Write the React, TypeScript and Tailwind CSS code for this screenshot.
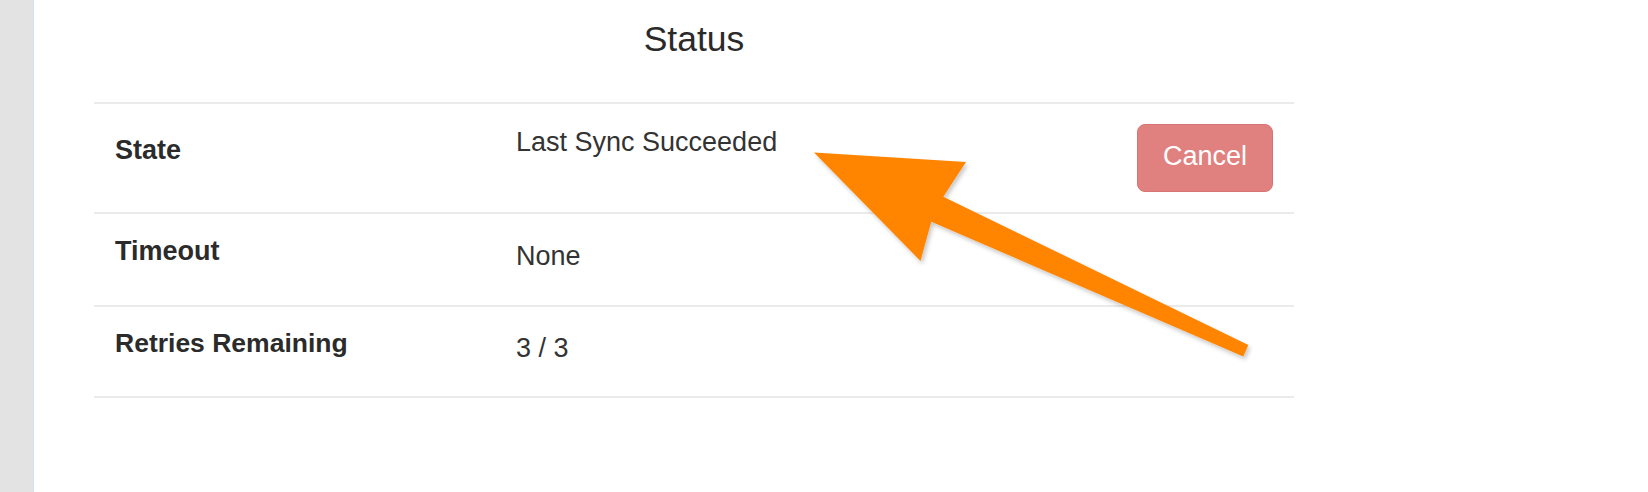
import React from "react";

export default function App() {
  return (
    <div className="relative flex h-[492px] w-[1648px] overflow-hidden bg-white font-['Liberation_Sans',Arial,sans-serif]">
      <div className="h-full w-[34px] shrink-0 border-r border-[#d8e2ea] bg-[#e3e3e3]" />
      <div className="pl-[60px]">
        <div className="w-[1200px]">
          <div className="h-[102px] pt-[21px] text-center text-[35.5px] leading-[36px] text-[#2a2a2a]">
            Status
          </div>

          <div className="flex h-[110px] border-t-2 border-[#ebebeb]">
            <div className="w-[400px] shrink-0 pl-[21px] pt-[33px] text-[27px] font-bold leading-[27px] text-[#2b2b2b]">
              State
            </div>
            <div className="flex-1 pl-[22px] pt-[25px] text-[27px] leading-[27px] text-[#333333]">
              Last Sync Succeeded
            </div>
            <div className="shrink-0 pr-[21px] pt-[20px]">
              <button className="flex h-[68px] w-[136px] items-center justify-center rounded-[8px] border border-[#d97473] bg-[#e1817f] pb-[4px] text-[27px] leading-[27px] text-white">
                Cancel
              </button>
            </div>
          </div>

          <div className="flex h-[93px] border-t-2 border-[#ebebeb]">
            <div className="w-[400px] shrink-0 pl-[21px] pt-[24px] text-[27px] font-bold leading-[27px] text-[#2b2b2b]">
              Timeout
            </div>
            <div className="flex-1 pl-[22px] pt-[29px] text-[27px] leading-[27px] text-[#333333]">
              None
            </div>
          </div>

          <div className="flex h-[93px] border-y-2 border-[#ebebeb]">
            <div className="w-[400px] shrink-0 pl-[21px] pt-[23px] text-[26.5px] font-bold leading-[27px] text-[#2b2b2b]">
              Retries Remaining
            </div>
            <div className="flex-1 pl-[22px] pt-[28px] text-[27px] leading-[27px] text-[#333333]">
              3 / 3
            </div>
          </div>
        </div>
      </div>

      <svg
        className="pointer-events-none absolute left-0 top-0"
        width="1648"
        height="492"
        viewBox="0 0 1648 492"
      >
        <defs>
          <filter id="arrowShadow" x="-10%" y="-10%" width="130%" height="130%">
            <feDropShadow dx="2" dy="3" stdDeviation="2" floodColor="#000000" floodOpacity="0.22" />
          </filter>
        </defs>
        <polygon
          points="814,152.5 966,162 943.3,196.7 1248.3,345 1243.3,356.5 931.3,221.7 920.5,261"
          fill="#ff8400"
          filter="url(#arrowShadow)"
        />
      </svg>
    </div>
  );
}
